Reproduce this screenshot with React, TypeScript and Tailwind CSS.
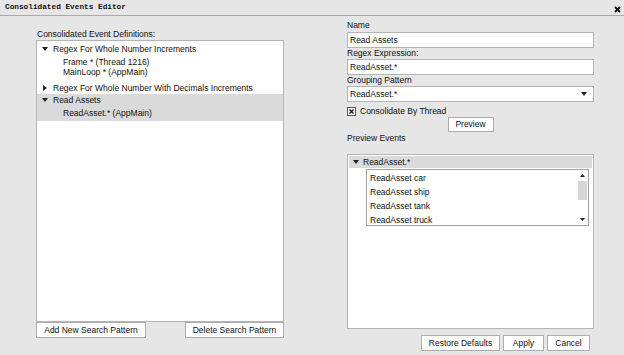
import React from 'react';

const ui = { fontFamily: '"Liberation Sans", Arial, sans-serif' };

function Caret({ open }: { open: boolean }) {
    return open ? (
        <svg width="6" height="4" viewBox="0 0 6 4" className="shrink-0">
            <path d="M0 0 H6 L3 4 Z" fill="#222" />
        </svg>
    ) : (
        <svg width="4" height="6" viewBox="0 0 4 6" className="shrink-0">
            <path d="M0 0 V6 L4 3 Z" fill="#222" />
        </svg>
    );
}

function Btn({ label, className }: { label: string; className: string }) {
    return (
        <div className={`flex items-center justify-center bg-white border border-[#adadad] text-[8.5px] text-[#111] ${className}`}>
            {label}
        </div>
    );
}

function Field({ value, dropdown }: { value: string; dropdown?: boolean }) {
    return (
        <div className="h-[16px] bg-white border border-[#b4b4b4] flex items-center pl-[2px] pr-[6px] text-[8.5px] text-[#111]">
            <span className="flex-1">{value}</span>
            {dropdown && (
                <svg width="6" height="4" viewBox="0 0 6 4">
                    <path d="M0 0 H6 L3 4 Z" fill="#222" />
                </svg>
            )}
        </div>
    );
}

export default function App() {
    const groups = [
        { title: 'Regex For Whole Number Increments', open: true, items: ['Frame * (Thread 1216)', 'MainLoop * (AppMain)'] },
        { title: 'Regex For Whole Number With Decimals Increments', open: false, items: [] },
        { title: 'Read Assets', open: true, items: ['ReadAsset.* (AppMain)'], selected: true },
    ];
    const preview = ['ReadAsset car', 'ReadAsset ship', 'ReadAsset tank', 'ReadAsset truck'];

    return (
        <div className="w-[624px] h-[355px] bg-[#e6e6e6] overflow-hidden text-[#111]" style={ui}>
            {/* title bar */}
            <div className="h-[16px] border-b border-[#a9a9a9] flex items-center pl-[5px] pr-[3px]">
                <span className="flex-1 text-[7.75px] font-bold" style={{ fontFamily: '"Liberation Mono", monospace' }}>
                    Consolidated Events Editor
                </span>
                <svg width="7" height="7" viewBox="0 0 7 7" className="mt-[3px]">
                    <path d="M1 1 L6 6 M6 1 L1 6" stroke="#111" strokeWidth="1.8" />
                </svg>
            </div>

            <div className="flex">
                {/* left column */}
                <div className="ml-[36px] w-[248px] flex flex-col">
                    <div className="h-[24px] pt-[13px] pl-[1px] text-[8.5px] leading-[11px]">Consolidated Event Definitions:</div>
                    <div className="h-[282px] bg-white border border-[#b4b4b4] pt-[2px] text-[8.5px]">
                        {groups.map((g, i) => (
                            <div key={i} className={`${i === 1 ? 'mt-[5px]' : ''} ${g.selected ? 'bg-[#dadada] pb-[3px]' : ''}`}>
                                <div className="h-[12px] flex items-center">
                                    <div className="w-[16px] flex justify-center">
                                        <Caret open={g.open} />
                                    </div>
                                    <span>{g.title}</span>
                                </div>
                                {g.items.length > 0 && (
                                    <div className="mt-[2px]">
                                        {g.items.map((it) => (
                                            <div key={it} className="h-[10px] flex items-center pl-[26px]">{it}</div>
                                        ))}
                                    </div>
                                )}
                            </div>
                        ))}
                    </div>
                    <div className="flex justify-between">
                        <Btn label="Add New Search Pattern" className="w-[110px] h-[16px]" />
                        <Btn label="Delete Search Pattern" className="w-[99px] h-[16px]" />
                    </div>
                </div>

                {/* right column */}
                <div className="ml-[63px] w-[247px] flex flex-col text-[8.5px]">
                    <div className="h-[16px] flex items-end pb-[1px] leading-[11px]">Name</div>
                    <Field value="Read Assets" />
                    <div className="h-[11px] flex items-end leading-[11px]">Regex Expression:</div>
                    <Field value="ReadAsset.*" />
                    <div className="h-[11px] flex items-end leading-[11px]">Grouping Pattern</div>
                    <Field value="ReadAsset.*" dropdown />
                    <div className="mt-[4px] h-[10px] flex items-center gap-[4px]">
                        <div className="w-[9px] h-[9px] bg-white border border-[#555] flex items-center justify-center">
                            <svg width="5" height="5" viewBox="0 0 5 5">
                                <path d="M0.5 0.5 L4.5 4.5 M4.5 0.5 L0.5 4.5" stroke="#111" strokeWidth="1.3" />
                            </svg>
                        </div>
                        <span>Consolidate By Thread</span>
                    </div>
                    <div className="mt-[1px] flex justify-center">
                        <Btn label="Preview" className="w-[46px] h-[15px]" />
                    </div>
                    <div className="h-[12px] flex items-center">Preview Events</div>
                    <div className="mt-[10px] h-[175px] bg-white border border-[#b4b4b4] p-[1px]">
                        <div className="h-[12px] bg-[#dadada] flex items-center">
                            <div className="w-[14px] flex justify-center">
                                <Caret open />
                            </div>
                            <span>ReadAsset.*</span>
                        </div>
                        <div className="ml-[17px] mr-[3px] mt-[1px] h-[57px] border border-[#a0a0a0] flex">
                            <div className="flex-1 pt-[1px]">
                                {preview.map((p) => (
                                    <div key={p} className="h-[14px] flex items-center pl-[3px]">{p}</div>
                                ))}
                            </div>
                            <div className="w-[11px] flex flex-col items-center pr-[1px]">
                                <div className="h-[11px] flex items-center">
                                    <svg width="5" height="3" viewBox="0 0 5 3"><path d="M0 3 H5 L2.5 0 Z" fill="#222" /></svg>
                                </div>
                                <div className="w-[9px] h-[19px] bg-[#d6d6d6]" />
                                <div className="flex-1" />
                                <div className="h-[11px] flex items-center">
                                    <svg width="5" height="3" viewBox="0 0 5 3"><path d="M0 0 H5 L2.5 3 Z" fill="#222" /></svg>
                                </div>
                            </div>
                        </div>
                    </div>
                    <div className="mt-[6px] flex justify-end gap-[3px] pr-[4px]">
                        <Btn label="Restore Defaults" className="w-[79px] h-[16px]" />
                        <Btn label="Apply" className="w-[41px] h-[16px]" />
                        <Btn label="Cancel" className="w-[43px] h-[16px]" />
                    </div>
                </div>
            </div>
        </div>
    );
}
